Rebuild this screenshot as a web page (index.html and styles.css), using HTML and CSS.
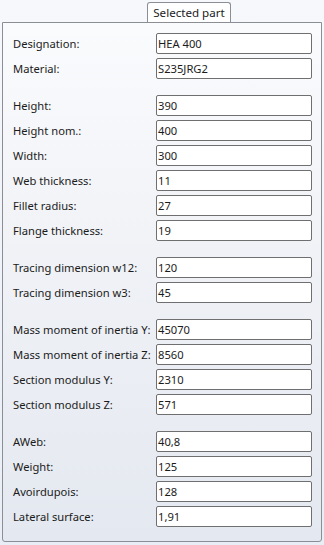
FILE: index.html
```html
<!DOCTYPE html>
<html>
<head>
<meta charset="utf-8">
<link rel="stylesheet" href="styles.css">
</head>
<body>
<div class="window">
  <div class="tabstrip">
    <div class="tab">Selected part</div>
  </div>
  <div class="panel">
    <div class="group">
      <div class="row"><span class="label">Designation:</span><div class="field">HEA 400</div></div>
      <div class="row"><span class="label">Material:</span><div class="field">S235JRG2</div></div>
    </div>
    <div class="group">
      <div class="row"><span class="label">Height:</span><div class="field">390</div></div>
      <div class="row"><span class="label">Height nom.:</span><div class="field">400</div></div>
      <div class="row"><span class="label">Width:</span><div class="field">300</div></div>
      <div class="row"><span class="label">Web thickness:</span><div class="field">11</div></div>
      <div class="row"><span class="label">Fillet radius:</span><div class="field">27</div></div>
      <div class="row"><span class="label">Flange thickness:</span><div class="field">19</div></div>
    </div>
    <div class="group">
      <div class="row"><span class="label">Tracing dimension w12:</span><div class="field">120</div></div>
      <div class="row"><span class="label">Tracing dimension w3:</span><div class="field">45</div></div>
    </div>
    <div class="group">
      <div class="row"><span class="label">Mass moment of inertia Y:</span><div class="field">45070</div></div>
      <div class="row"><span class="label">Mass moment of inertia Z:</span><div class="field">8560</div></div>
      <div class="row"><span class="label">Section modulus Y:</span><div class="field">2310</div></div>
      <div class="row"><span class="label">Section modulus Z:</span><div class="field">571</div></div>
    </div>
    <div class="group">
      <div class="row"><span class="label">AWeb:</span><div class="field">40,8</div></div>
      <div class="row"><span class="label">Weight:</span><div class="field">125</div></div>
      <div class="row"><span class="label">Avoirdupois:</span><div class="field">128</div></div>
      <div class="row"><span class="label">Lateral surface:</span><div class="field">1,91</div></div>
    </div>
  </div>
</div>
</body>
</html>
```
FILE: styles.css
```css
html, body {
  margin: 0;
  padding: 0;
}
body {
  width: 324px;
  height: 545px;
  background: linear-gradient(to bottom, #f6f8fc 0%, #e9eef6 100%);
  font-family: "Noto Sans", "Open Sans", sans-serif;
  font-size: 11.2px;
  color: #1b1b1b;
  overflow: hidden;
}
.window {
  padding: 2px 2px 0 2px;
}
.tabstrip {
  height: 20px;
  display: flex;
  padding-left: 145px;
}
.tab {
  width: 84px;
  height: 20px;
  box-sizing: border-box;
  border: 1px solid #8b8e94;
  border-bottom: none;
  border-radius: 3px 3px 0 0;
  background: #ffffff;
  text-align: center;
  line-height: 20px;
  font-size: 11.6px;
}
.panel {
  width: 320px;
  height: 520px;
  box-sizing: border-box;
  border: 1px solid #8b8e94;
  border-radius: 0 0 3px 3px;
  background: linear-gradient(to bottom, #fafbfd 0%, #f1f3f7 40%, #e4e8f0 100%);
  padding: 10px 9px 0 10px;
  display: flex;
  flex-direction: column;
  gap: 16px;
}
.group {
  display: flex;
  flex-direction: column;
  gap: 4px;
}
.row {
  display: flex;
  align-items: center;
  height: 21px;
}
.label {
  width: 143px;
  flex: none;
  white-space: nowrap;
}
.field {
  flex: 1;
  height: 21px;
  box-sizing: border-box;
  border: 1px solid #6f6f6f;
  border-radius: 2px;
  background: #ffffff;
  line-height: 19px;
  padding-left: 1px;
  white-space: nowrap;
}
```
